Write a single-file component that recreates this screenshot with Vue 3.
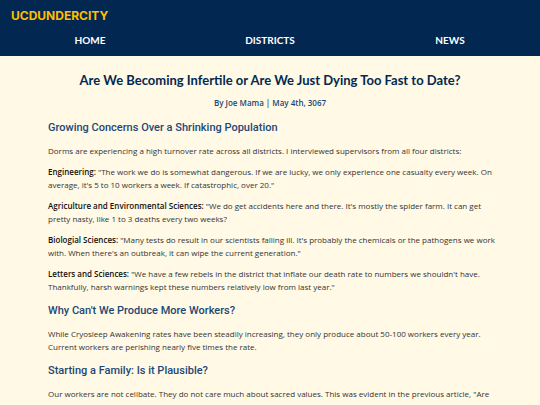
<script setup>
const links = ['Home', 'Districts', 'News']

const quotes = [
  { who: 'Engineering:', lines: [`"The work we do is somewhat dangerous. If we are lucky, we only experience one casualty every week. On`, `average, it's 5 to 10 workers a week. If catastrophic, over 20."`] },
  { who: 'Agriculture and Environmental Sciences:', lines: [`"We do get accidents here and there. It's mostly the spider farm. It can get`, `pretty nasty, like 1 to 3 deaths every two weeks?`] },
  { who: 'Biologial Sciences:', lines: [`"Many tests do result in our scientists falling ill. It's probably the chemicals or the pathogens we work`, `with. When there's an outbreak, it can wipe the current generation."`] },
  { who: 'Letters and Sciences:', lines: [`"We have a few rebels in the district that inflate our death rate to numbers we shouldn't have.`, `Thankfully, harsh warnings kept these numbers relatively low from last year."`] }
]
</script>

<template>
  <header class="site-header">
    <a class="brand" href="#">UCDUNDERCITY</a>
    <nav class="nav">
      <a v-for="link in links" :key="link" href="#">{{ link }}</a>
    </nav>
  </header>
  <main class="article">
    <h1>Are We Becoming Infertile or Are We Just Dying Too Fast to Date?</h1>
    <p class="byline">By Joe Mama | May 4th, 3067</p>
    <div class="story">
      <h2>Growing Concerns Over a Shrinking Population</h2>
      <p>Dorms are experiencing a high turnover rate across all districts. I interviewed supervisors from all four districts:</p>
      <p v-for="quote in quotes" :key="quote.who"><strong>{{ quote.who }}</strong> {{ quote.lines[0] }}<br>{{ quote.lines[1] }}</p>
      <h2>Why Can't We Produce More Workers?</h2>
      <p>While Cryosleep Awakening rates have been steadily increasing, they only produce about 50-100 workers every year.<br>Current workers are perishing nearly five times the rate.</p>
      <h2>Starting a Family: Is it Plausible?</h2>
      <p>Our workers are not celibate. They do not care much about sacred values. This was evident in the previous article, "Are<br>Willa Have Less Predictions: Making Residents Less Productive?" Having Agriculture and Environmental scientists</p>
    </div>
  </main>
</template>

<style>
html,
body {
  height: 100%;
  overflow: hidden;
  background: #fff9e5;
}
</style>

<style scoped>
.site-header {
  padding: 8px 0;
  background: #022851;
  font-family: "Proxima Nova", Lato, sans-serif;
}

.site-header a {
  text-decoration: none;
}

.brand {
  display: block;
  margin-left: 11px;
  color: #ffbf00;
  font-family: "Proxima Nova", Inter, sans-serif;
  font-size: 12px;
  font-weight: 700;
  line-height: 16px;
}

.nav {
  display: grid;
  grid-template-columns: repeat(3, 1fr);
  padding-top: 8px;
  text-align: center;
}

.nav a {
  color: #fff;
  font-size: 10px;
  font-weight: 700;
  line-height: 16px;
  text-transform: uppercase;
}

.article {
  padding: 16px 32px;
  color: #333;
  font-family: "Proxima Nova", "Open Sans", sans-serif;
  font-size: 8px;
  line-height: 13px;
}

.story {
  padding-left: 16px;
}

h1,
h2,
p {
  margin: 0;
}

h1 {
  color: #022851;
  font-family: "Proxima Nova", Lato, sans-serif;
  font-size: 13px;
  font-weight: 700;
  line-height: 16px;
  text-align: center;
}

.byline {
  margin: 8px 0 11px;
  color: #1d4776;
  font-weight: 600;
  text-align: center;
}

h2 {
  margin: 10px 0 8px;
  color: #1d4776;
  font-family: "Proxima Nova", Roboto, sans-serif;
  font-size: 11px;
  font-weight: 500;
  line-height: 16px;
}

p + p {
  margin-top: 8px;
}

strong {
  color: #111;
  font-weight: 600;
}
</style>
